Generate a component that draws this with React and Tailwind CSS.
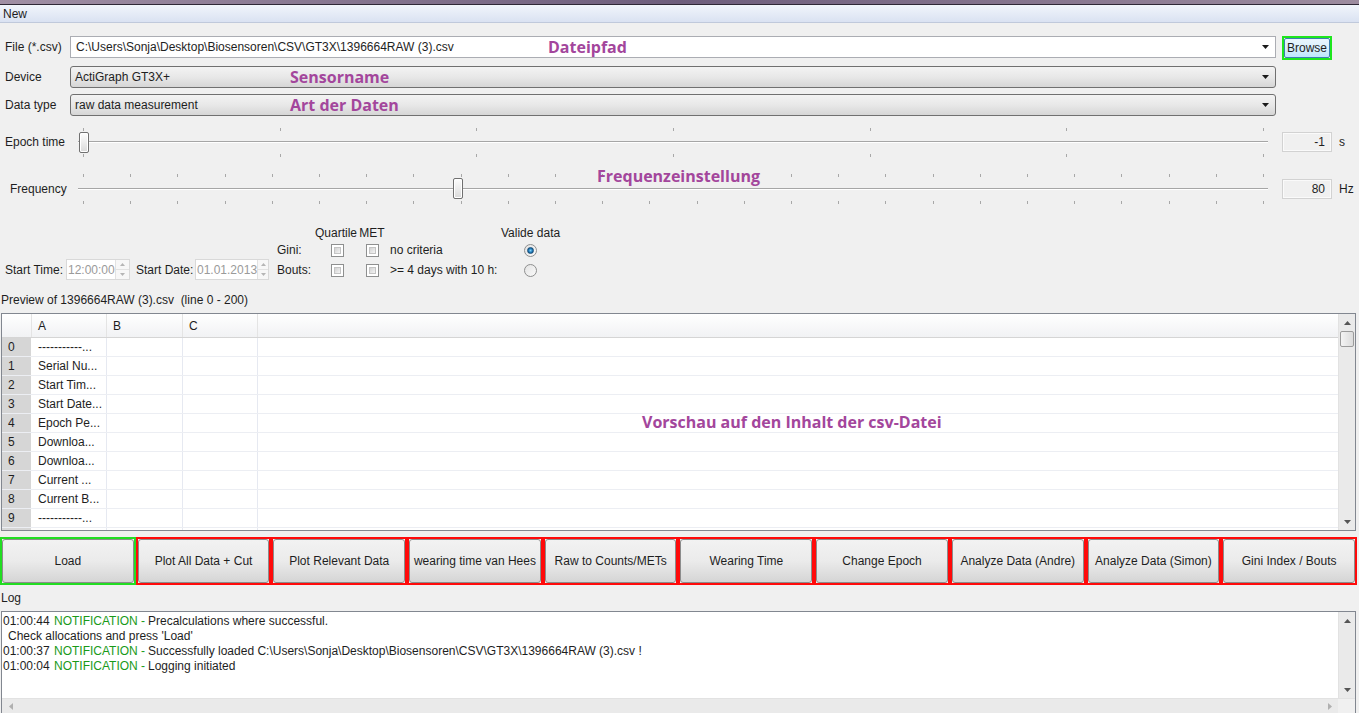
import React from 'react';

const note = "font-['Open_Sans',sans-serif] font-bold text-[16px] leading-none text-[#a3469c] whitespace-nowrap";

const epochTicks = Array.from({ length: 7 }, (_, i) => Math.round(5 + (1180 / 6) * i));
const freqTicks = Array.from({ length: 26 }, (_, i) => Math.round(5 + (1180 / 25) * i));

const Arrow = () => (
  <svg width="8" height="4" className="absolute right-[5px] top-1/2 -translate-y-1/2">
    <path d="M0 0 H7 L3.5 4 Z" fill="#1a1a1a" />
  </svg>
);

const Combo = ({ children, noteText, noteLeft }) => (
  <div className="relative w-[1206px] h-[22px] flex items-center pl-[4px] rounded-[3px] border border-[#707070] bg-linear-to-b from-[#f3f3f3] via-[#e8e8e8] to-[#d6d6d6]">
    {children}
    {noteText && (
      <span className={`absolute top-1/2 -translate-y-1/2 ${note}`} style={{ left: noteLeft }}>
        {noteText}
      </span>
    )}
    <Arrow />
  </div>
);

const Slider = ({ ticks, top, bottom, track, handleLeft, handleTop }) => (
  <div className="relative w-[1190px] h-[40px]">
    <svg width="1190" height="40" className="absolute inset-0">
      {ticks.map((x) => (
        <g key={x} stroke="#a8a8a8">
          <line x1={x + 0.5} x2={x + 0.5} y1={top} y2={top + 3} />
          <line x1={x + 0.5} x2={x + 0.5} y1={bottom} y2={bottom + 3} />
        </g>
      ))}
      <line x1="0" x2="1190" y1={track + 0.5} y2={track + 0.5} stroke="#a6a6a6" />
      <line x1="0" x2="1190" y1={track + 1.5} y2={track + 1.5} stroke="#ffffff" />
    </svg>
    <div
      className="absolute w-[10px] h-[21px] rounded-[2px] border border-[#707070] bg-linear-to-b from-[#fdfdfd] via-[#ececec] to-[#d9d9d9] shadow-[inset_0_0_0_1px_#ffffff]"
      style={{ left: handleLeft, top: handleTop }}
    />
  </div>
);

const ValueBox = ({ value }) => (
  <div className="w-[50px] h-[20px] flex items-center justify-end pr-[6px] border border-[#d2d2d2] shadow-[inset_0_0_0_1px_#fafafa] bg-[#f0f0f0]">
    {value}
  </div>
);

const Spin = ({ value, width }) => (
  <div className={`${width} h-[21px] flex bg-white border border-[#d9d9d9]`}>
    <div className="flex-1 flex items-center pl-[1px] text-[#9a9a9a]">{value}</div>
    <div className="w-[15px] flex flex-col border-l border-[#e2e2e2]">
      <div className="flex-1 flex items-center justify-center border-b border-[#e2e2e2] bg-[#f7f7f7]">
        <svg width="5" height="3"><path d="M0 3 L2.5 0 L5 3 Z" fill="#b5b5b5" /></svg>
      </div>
      <div className="flex-1 flex items-center justify-center bg-[#f7f7f7]">
        <svg width="5" height="3"><path d="M0 0 L2.5 3 L5 0 Z" fill="#b5b5b5" /></svg>
      </div>
    </div>
  </div>
);

const Check = () => (
  <div className="w-[13px] h-[13px] border border-[#8e8f8f] bg-white p-[2px]">
    <div className="w-full h-full bg-linear-to-br from-[#d2d2d2] to-[#f4f4f4] border border-[#c4c4c4]" />
  </div>
);

const Radio = ({ checked }) => (
  <div className="w-[13px] h-[13px] rounded-full border border-[#8e8f8f] bg-linear-to-br from-[#e3e3e3] to-[#fafafa] flex items-center justify-center">
    {checked && (
      <div className="w-[7px] h-[7px] rounded-full bg-radial from-[#7fd0f5] via-[#1f7fc0] to-[#0d3f66] border border-[#1a4d78]" />
    )}
  </div>
);

const VScroll = ({ thumb }) => (
  <div className="w-[17px] h-full flex flex-col bg-[#eaeaea] border-l border-[#e2e2e2]">
    <div className="h-[17px] shrink-0 flex items-center justify-center">
      <svg width="7" height="4"><path d="M0 4 L3.5 0 L7 4 Z" fill="#555" /></svg>
    </div>
    {thumb && (
      <div className="mx-[1px] h-[16px] shrink-0 rounded-[2px] border border-[#9b9b9b] bg-linear-to-r from-[#f4f4f4] to-[#dcdcdc]" />
    )}
    <div className="flex-1" />
    <div className="h-[17px] shrink-0 flex items-center justify-center">
      <svg width="7" height="4"><path d="M0 0 L3.5 4 L7 0 Z" fill="#555" /></svg>
    </div>
  </div>
);

const rows = [
  '-----------...',
  'Serial Nu...',
  'Start Tim...',
  'Start Date...',
  'Epoch Pe...',
  'Downloa...',
  'Downloa...',
  'Current ...',
  'Current B...',
  '-----------...',
  '',
];

const buttons = [
  'Load',
  'Plot All Data + Cut',
  'Plot Relevant Data',
  'wearing time van Hees',
  'Raw to Counts/METs',
  'Wearing Time',
  'Change Epoch',
  'Analyze Data (Andre)',
  'Analyze Data (Simon)',
  'Gini Index / Bouts',
];

const logLines = [
  { time: '01:00:44', msg: 'Precalculations where successful.' },
  { extra: "Check allocations and press 'Load'" },
  { time: '01:00:37', msg: 'Successfully loaded C:\\Users\\Sonja\\Desktop\\Biosensoren\\CSV\\GT3X\\1396664RAW (3).csv !' },
  { time: '01:00:04', msg: 'Logging initiated' },
];

export default function App() {
  return (
    <div className="w-[1359px] h-[713px] overflow-hidden bg-[#f0f0f0] text-[12px] leading-none text-[#1e1e1e] font-['Liberation_Sans',Arial,sans-serif]">
      {/* window chrome + menu */}
      <div className="h-[5px] bg-linear-to-r from-[#a08fa4] via-[#6e5e7c] to-[#9d8c9f] border-b border-[#2f2836]" />
      <div className="h-[18px] flex items-center pl-[3px] bg-linear-to-b from-[#f1f5fb] to-[#dae2f2] border-b border-[#c0c9db]">
        New
      </div>

      {/* file / device / data type */}
      <div className="mt-[13px] flex items-start h-[24px]">
        <div className="w-[70px] pl-[5px] h-[22px] flex items-center">File (*.csv)</div>
        <div className="relative w-[1206px] h-[22px] flex items-center pl-[5px] bg-white border border-[#abadb3]">
          C:\Users\Sonja\Desktop\Biosensoren\CSV\GT3X\1396664RAW (3).csv
          <span className={`absolute left-[477px] top-1/2 -translate-y-1/2 ${note}`}>Dateipfad</span>
          <Arrow />
        </div>
        <div className="ml-[6px] w-[50px] h-[24px] border-2 border-[#1ee61e]">
          <div className="w-full h-full flex items-center justify-center rounded-[2px] border border-[#3c7fb1] bg-linear-to-b from-[#eaf6fd] via-[#d9f0fc] to-[#bee6fd]">
            Browse
          </div>
        </div>
      </div>
      <div className="mt-[6px] flex items-center h-[21px]">
        <div className="w-[70px] pl-[5px]">Device</div>
        <Combo noteText="Sensorname" noteLeft={219}>ActiGraph GT3X+</Combo>
      </div>
      <div className="mt-[7px] flex items-center h-[21px]">
        <div className="w-[70px] pl-[5px]">Data type</div>
        <Combo noteText="Art der Daten" noteLeft={219}>raw data measurement</Combo>
      </div>

      {/* epoch time */}
      <div className="mt-[7px] flex items-center h-[40px]">
        <div className="w-[78px] pl-[5px]">Epoch time</div>
        <Slider ticks={epochTicks} top={6} bottom={32} track={19} handleLeft={1} handleTop={10} />
        <div className="ml-[14px]"><ValueBox value="-1" /></div>
        <div className="ml-[7px]">s</div>
      </div>

      {/* frequency */}
      <div className="mt-[7px] flex items-center h-[40px]">
        <div className="w-[78px] pl-[10px]">Frequency</div>
        <div className="relative">
          <Slider ticks={freqTicks} top={5} bottom={32} track={19} handleLeft={375} handleTop={9} />
          <span className={`absolute left-[519px] top-[-1px] ${note}`}>Frequenzeinstellung</span>
        </div>
        <div className="ml-[14px]"><ValueBox value="80" /></div>
        <div className="ml-[7px]">Hz</div>
      </div>

      {/* options */}
      <div className="mt-[17px] flex items-end">
        <div className="flex items-center h-[21px] pl-[5px]">
          <span className="w-[61px]">Start Time:</span>
          <Spin value="12:00:00" width="w-[64px]" />
          <span className="ml-[6px] w-[59px]">Start Date:</span>
          <Spin value="01.01.2013" width="w-[74px]" />
        </div>
        <div className="ml-[6px] grid grid-cols-[38px_46px_26px_116px_58px] grid-rows-[14px_20px_20px] items-center">
          <div />
          <div className="text-center">Quartile</div>
          <div className="text-center">MET</div>
          <div />
          <div className="text-center whitespace-nowrap">Valide data</div>

          <div className="pl-[2px]">Gini:</div>
          <div className="flex justify-center pl-[2px]"><Check /></div>
          <div className="flex justify-center pl-[1px]"><Check /></div>
          <div className="pl-[5px]">no criteria</div>
          <div className="flex justify-center"><Radio checked /></div>

          <div className="pl-[2px]">Bouts:</div>
          <div className="flex justify-center pl-[2px]"><Check /></div>
          <div className="flex justify-center pl-[1px]"><Check /></div>
          <div className="pl-[5px] whitespace-nowrap">&gt;= 4 days with 10 h:</div>
          <div className="flex justify-center"><Radio /></div>
        </div>
      </div>

      {/* preview */}
      <div className="mt-[13px] pl-[1px] h-[14px] flex items-center whitespace-pre">Preview of 1396664RAW (3).csv  (line 0 - 200)</div>
      <div className="relative mt-[6px] ml-[1px] w-[1355px] h-[218px] flex bg-white border border-[#828790] overflow-hidden">
        <div className="flex-1 flex flex-col">
          <div className="h-[24px] shrink-0 flex border-b border-[#d5d5d5] bg-linear-to-b from-[#ffffff] to-[#f1f2f4]">
            <div className="w-[30px] border-r border-[#e4e4e4]" />
            <div className="w-[75px] pl-[6px] flex items-center border-r border-[#e4e4e4]">A</div>
            <div className="w-[76px] pl-[6px] flex items-center border-r border-[#e4e4e4]">B</div>
            <div className="w-[75px] pl-[6px] flex items-center border-r border-[#e4e4e4]">C</div>
            <div className="flex-1" />
          </div>
          {rows.map((r, i) => (
            <div key={i} className="h-[19px] shrink-0 flex border-b border-[#eceef3]">
              <div className="w-[30px] pl-[6px] flex items-center bg-[#d6d6d6] border-r border-[#ffffff]">{i < 10 ? i : ''}</div>
              <div className="w-[75px] pl-[6px] flex items-center border-r border-[#e6e9f1] whitespace-nowrap">{r}</div>
              <div className="w-[76px] border-r border-[#e6e9f1]" />
              <div className="w-[75px] border-r border-[#e6e9f1]" />
              <div className="flex-1" />
            </div>
          ))}
        </div>
        <VScroll thumb />
        <span className={`absolute left-[640px] top-[100px] ${note}`}>Vorschau auf den Inhalt der csv-Datei</span>
      </div>

      {/* action buttons */}
      <div className="mt-[6px] w-[1357px] h-[48px] grid grid-cols-10">
        {buttons.map((b, i) => (
          <div key={b} className={`h-full border-2 ${i === 0 ? 'border-[#22dd22]' : 'border-[#ff0a0a]'}`}>
            <div className="w-full h-full flex items-center justify-center rounded-[3px] border border-[#8c8c8c] bg-linear-to-b from-[#f2f2f2] via-[#ebebeb] to-[#d5d5d5] whitespace-nowrap">
              {b}
            </div>
          </div>
        ))}
      </div>

      {/* log */}
      <div className="h-[26px] pl-[1px] flex items-center">Log</div>
      <div className="ml-[1px] w-[1355px] h-[110px] flex flex-col bg-white border border-[#828790]">
        <div className="h-[86px] flex">
          <div className="flex-1 pt-[1px] pl-[1px]">
            {logLines.map((l, i) =>
              l.extra ? (
                <div key={i} className="h-[15px] flex items-center pl-[5px]">{l.extra}</div>
              ) : (
                <div key={i} className="h-[15px] flex items-center whitespace-nowrap">
                  <span className="w-[51px] shrink-0">{l.time}</span>
                  <span className="w-[94px] shrink-0 text-[#199a19]">NOTIFICATION -</span>
                  <span>{l.msg}</span>
                </div>
              )
            )}
          </div>
          <VScroll />
        </div>
        <div className="h-[16px] flex bg-[#eaeaea] border-t border-[#e2e2e2]">
          <div className="w-[17px] flex items-center justify-center">
            <svg width="4" height="7"><path d="M4 0 L0 3.5 L4 7 Z" fill="#b0b0b0" /></svg>
          </div>
          <div className="flex-1" />
          <div className="w-[17px] flex items-center justify-center">
            <svg width="4" height="7"><path d="M0 0 L4 3.5 L0 7 Z" fill="#b0b0b0" /></svg>
          </div>
          <div className="w-[17px] bg-[#f0f0f0]" />
        </div>
      </div>
    </div>
  );
}
